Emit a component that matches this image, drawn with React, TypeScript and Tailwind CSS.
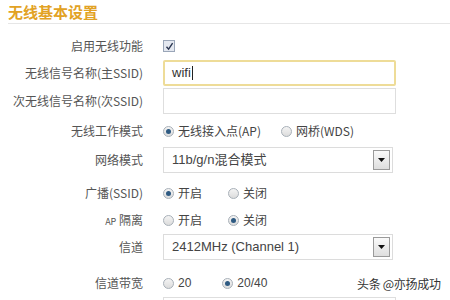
import React from 'react'

const font = { fontFamily: '"Noto Sans CJK SC", "Liberation Sans", sans-serif' }

const Radio = ({ checked, label }: { checked?: boolean; label: string }) => (
  <label className="flex items-center gap-[4px] text-[12px] text-[#444]">
    <span className="flex h-[11px] w-[11px] items-center justify-center rounded-full border border-[#a8b0b8] bg-gradient-to-b from-[#f4f4f4] to-[#dcdcdc]">
      {checked && <span className="h-[5px] w-[5px] rounded-full bg-[#2e5a82]" />}
    </span>
    <span>{label}</span>
  </label>
)

const Select = ({ value }: { value: string }) => (
  <div className="flex h-[26px] w-[230px] items-center justify-between border border-[#dcdcdc] bg-white pl-[8px] pr-[2px] text-[13px] text-[#444]">
    <span style={{ fontFamily: '"Liberation Sans", "Noto Sans CJK SC", sans-serif' }}>{value}</span>
    <span className="flex h-[20px] w-[17px] items-center justify-center border border-[#9a9a9a] bg-gradient-to-b from-[#fafafa] to-[#dedede]">
      <svg width="7" height="4" viewBox="0 0 7 4">
        <path d="M0 0h7L3.5 4z" fill="#111" />
      </svg>
    </span>
  </div>
)

const Row = ({ label, className, children }: { label: React.ReactNode; className: string; children?: React.ReactNode }) => (
  <div className={`flex items-center ${className}`}>
    <div className="w-[143px] shrink-0 text-right text-[12px] text-[#555]">{label}</div>
    <div className="ml-[20px] flex items-center">{children}</div>
  </div>
)

const App: React.FC = () => {
  return (
    <div className="relative h-[300px] w-[450px] overflow-hidden bg-white" style={font}>
      <div className="ml-[8px] flex h-[24px] items-center border-b border-[#e6e6e6]">
        <h1 className="text-[15px] font-bold leading-none text-[#e2a224]">无线基本设置</h1>
      </div>

      <div className="flex flex-col">
        <Row label="启用无线功能" className="mt-[11px] h-[22px]">
          <span className="flex h-[12px] w-[12px] items-center justify-center border border-[#9aa6b8] bg-[#e4e8f0]">
            <svg width="9" height="9" viewBox="0 0 9 9">
              <path d="M1.5 4.8 L3.6 7.2 L7.6 1.2" stroke="#2a3550" strokeWidth="1.4" fill="none" />
            </svg>
          </span>
        </Row>
        <Row label="无线信号名称(主SSID)" className="mt-[3px] h-[26px]">
          <div className="flex h-[26px] w-[233px] items-center rounded-[2px] border-2 border-[#eedc98] bg-white pl-[7px] text-[13px] text-[#333]">
            <span style={{ fontFamily: '"Liberation Sans", sans-serif' }}>wifi</span>
            <span className="ml-[1px] h-[14px] w-px bg-[#222]" />
          </div>
        </Row>
        <Row label="次无线信号名称(次SSID)" className="mt-[2px] h-[26px]">
          <div className="h-[26px] w-[233px] border border-[#dedede] bg-white" />
        </Row>
        <Row label="无线工作模式" className="mt-[4px] h-[26px]">
          <div className="flex items-center gap-[20px]">
            <Radio checked label="无线接入点(AP)" />
            <Radio label="网桥(WDS)" />
          </div>
        </Row>
        <Row label="网络模式" className="mt-[3px] h-[26px]">
          <Select value="11b/g/n混合模式" />
        </Row>
        <Row label="广播(SSID)" className="mt-[7px] h-[26px]">
          <div className="flex items-center gap-[26px]">
            <Radio checked label="开启" />
            <Radio label="关闭" />
          </div>
        </Row>
        <Row
          label={
            <span>
              <span className="text-[9px]">AP</span> 隔离
            </span>
          }
          className="mt-[1px] h-[26px]"
        >
          <div className="flex items-center gap-[26px]">
            <Radio label="开启" />
            <Radio checked label="关闭" />
          </div>
        </Row>
        <Row label="信道" className="mt-[1px] h-[26px]">
          <Select value="2412MHz (Channel 1)" />
        </Row>
        <Row label="信道带宽" className="mt-[10px] h-[26px]">
          <div className="flex items-center gap-[31px]" style={{ fontFamily: '"Liberation Sans", sans-serif' }}>
            <Radio label="20" />
            <Radio checked label="20/40" />
          </div>
        </Row>
        <Row label="" className="mt-[1px] h-[26px]">
          <div className="h-[26px] w-[233px] border border-[#dedede] bg-white" />
        </Row>
      </div>

      <div className="absolute left-[357px] top-[275px] whitespace-nowrap text-[12px] tracking-[-0.3px] text-[#333]">头条 @亦扬成功</div>
    </div>
  )
}

export default App
